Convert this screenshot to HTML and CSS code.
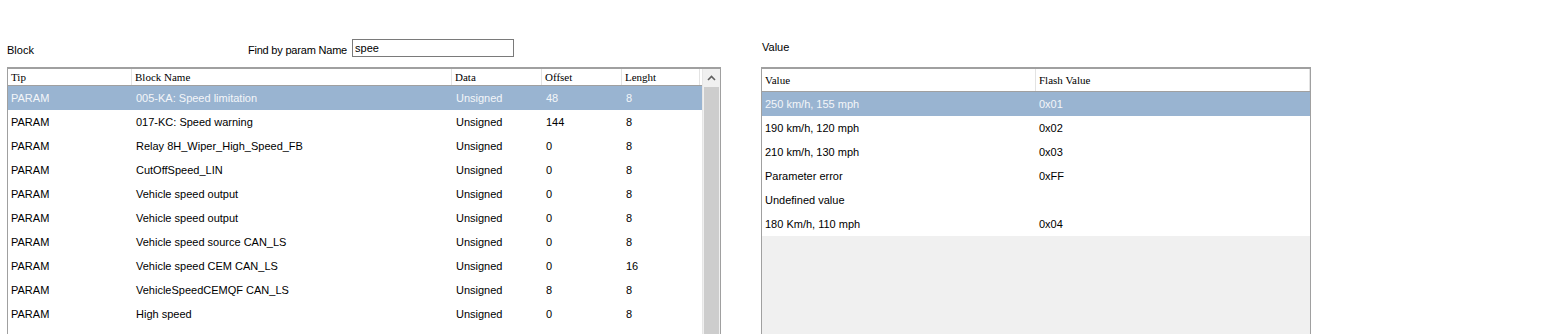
FILE: index.html
```html
<!DOCTYPE html>
<html lang="en">
<head>
    <meta charset="UTF-8">
    <title>Param Editor</title>
    <link rel="stylesheet" href="styles.css">
</head>
<body>
    <div class="page">
        <div class="block-panel">
            <div class="toolbar">
                <span class="label">Block</span>
                <span class="label find-label">Find by param Name</span>
                <input class="find-input" type="text" value="spee">
            </div>
            <div class="grid block-grid">
                <div class="grid-body">
                    <div class="row head">
                        <div>Tip</div><div>Block Name</div><div>Data</div><div>Offset</div><div>Lenght</div>
                    </div>
                    <div class="row selected">
                        <div>PARAM</div><div>005-KA: Speed limitation</div><div>Unsigned</div><div>48</div><div>8</div>
                    </div>
                    <div class="row">
                        <div>PARAM</div><div>017-KC: Speed warning</div><div>Unsigned</div><div>144</div><div>8</div>
                    </div>
                    <div class="row">
                        <div>PARAM</div><div>Relay 8H_Wiper_High_Speed_FB</div><div>Unsigned</div><div>0</div><div>8</div>
                    </div>
                    <div class="row">
                        <div>PARAM</div><div>CutOffSpeed_LIN</div><div>Unsigned</div><div>0</div><div>8</div>
                    </div>
                    <div class="row">
                        <div>PARAM</div><div>Vehicle speed output</div><div>Unsigned</div><div>0</div><div>8</div>
                    </div>
                    <div class="row">
                        <div>PARAM</div><div>Vehicle speed output</div><div>Unsigned</div><div>0</div><div>8</div>
                    </div>
                    <div class="row">
                        <div>PARAM</div><div>Vehicle speed source CAN_LS</div><div>Unsigned</div><div>0</div><div>8</div>
                    </div>
                    <div class="row">
                        <div>PARAM</div><div>Vehicle speed CEM CAN_LS</div><div>Unsigned</div><div>0</div><div>16</div>
                    </div>
                    <div class="row">
                        <div>PARAM</div><div>VehicleSpeedCEMQF CAN_LS</div><div>Unsigned</div><div>8</div><div>8</div>
                    </div>
                    <div class="row">
                        <div>PARAM</div><div>High speed</div><div>Unsigned</div><div>0</div><div>8</div>
                    </div>
                    <div class="row">
                        <div>PARAM</div><div>Low speed</div><div>Unsigned</div><div>0</div><div>8</div>
                    </div>
                </div>
                <div class="scrollbar">
                    <div class="scroll-btn">
                        <svg width="9" height="6" viewBox="0 0 9 6"><path d="M1 5 L4.5 1.5 L8 5" fill="none" stroke="#606060" stroke-width="1.6"/></svg>
                    </div>
                    <div class="scroll-thumb"></div>
                </div>
            </div>
        </div>

        <div class="value-panel">
            <div class="toolbar value-toolbar">
                <span class="label">Value</span>
            </div>
            <div class="grid value-grid">
                <div class="row head">
                    <div>Value</div><div>Flash Value</div>
                </div>
                <div class="row selected">
                    <div>250 km/h, 155 mph</div><div>0x01</div>
                </div>
                <div class="row">
                    <div>190 km/h, 120 mph</div><div>0x02</div>
                </div>
                <div class="row">
                    <div>210 km/h, 130 mph</div><div>0x03</div>
                </div>
                <div class="row">
                    <div>Parameter error</div><div>0xFF</div>
                </div>
                <div class="row">
                    <div>Undefined value</div><div></div>
                </div>
                <div class="row">
                    <div>180 Km/h, 110 mph</div><div>0x04</div>
                </div>
            </div>
        </div>
    </div>
</body>
</html>
```

FILE: styles.css
```css
body {
    margin: 0;
    background: #ffffff;
    font-family: "Liberation Sans", Arial, sans-serif;
    font-size: 11px;
    color: #000000;
    overflow: hidden;
    height: 334px;
}

.page {
    display: flex;
    padding: 38px 0 0 7px;
}

.block-panel {
    width: 714px;
}

.toolbar {
    display: flex;
    align-items: center;
    height: 20px;
    margin-bottom: 9px;
}

.label {
    font-size: 11px;
    padding-top: 4px;
}

.find-label {
    margin-left: 214px;
    letter-spacing: -0.2px;
}

.find-input {
    margin-left: 5px;
    width: 156px;
    height: 14px;
    padding: 1px 2px;
    border: 1px solid #7a7a7a;
    font-family: "Liberation Sans", Arial, sans-serif;
    font-size: 11px;
    outline: none;
}

.grid {
    border: 1px solid #a0a0a0;
    border-top-width: 2px;
    background: #f0f0f0;
    height: 300px;
}

.block-grid {
    display: flex;
}

.grid-body {
    width: 695px;
    background: #ffffff;
}

.row {
    display: grid;
    height: 24px;
    align-items: center;
    background: #ffffff;
}

.block-grid .row {
    grid-template-columns: 124px 320px 90px 80px 78px;
}

.row > div {
    padding-left: 4px;
    white-space: nowrap;
    overflow: hidden;
}

.block-grid .row > div:first-child {
    padding-left: 3px;
}

.row.head {
    height: 16px;
    border-bottom: 1px solid #a0a0a0;
    font-family: "Liberation Serif", "Times New Roman", serif;
    font-size: 11px;
    align-items: stretch;
}

.row.head > div {
    display: flex;
    align-items: center;
    border-right: 1px solid #e3e3e3;
    padding-left: 3px;
}

.row.selected {
    background: #99b4d1;
    color: #f4f6f9;
}

.scrollbar {
    width: 17px;
    border-left: 1px solid #e6e6e6;
    background: #f0f0f0;
    display: flex;
    flex-direction: column;
    align-items: center;
}

.scroll-btn {
    height: 17px;
    width: 17px;
    display: flex;
    align-items: center;
    justify-content: center;
}

.scroll-thumb {
    margin-top: 1px;
    width: 15px;
    flex: 1;
    background: #cdcdcd;
}

.value-panel {
    margin-left: 40px;
    width: 550px;
}

.value-toolbar {
    height: 17px;
    margin-bottom: 12px;
}

.value-toolbar .label {
    padding-left: 1px;
    padding-top: 0;
}

.value-grid {
    height: 268px;
}

.value-grid .row {
    grid-template-columns: 274px 274px;
}

.value-grid .row.head {
    height: 22px;
}

.value-grid .row > div {
    padding-left: 3px;
}
```
